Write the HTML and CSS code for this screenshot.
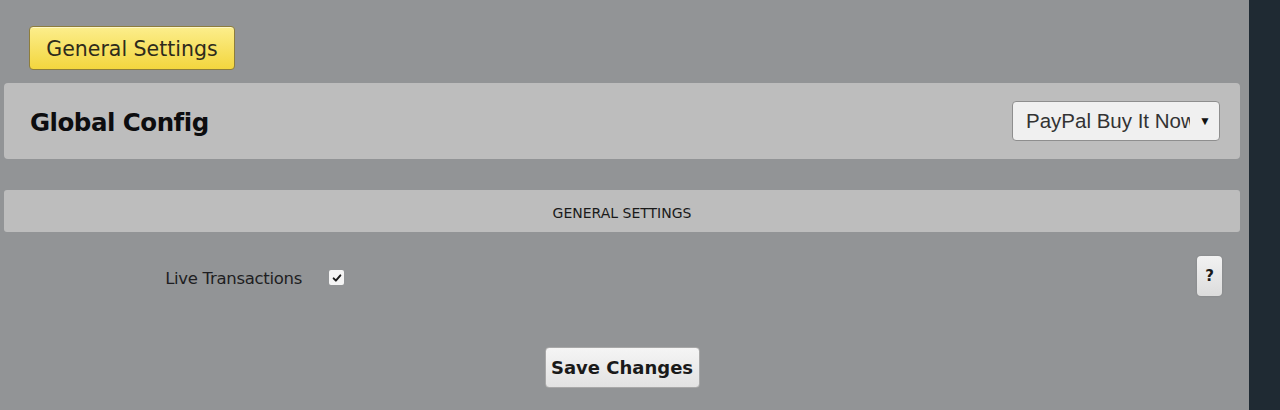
FILE: index.html
```html
<!DOCTYPE html>
<html>
<head>
<meta charset="utf-8">
<link rel="stylesheet" href="styles.css">
</head>
<body>
<div class="layout">
  <main class="main">
    <div class="tabs"><button class="tab">General Settings</button></div>
    <div class="panel">
      <h1 class="title">Global Config</h1>
      <div class="select">
        <span class="select-text">PayPal Buy It Now</span>
        <span class="select-arrow">&#9660;</span>
      </div>
    </div>
    <div class="section-head">GENERAL SETTINGS</div>
    <div class="row">
      <label class="row-label">Live Transactions</label>
      <span class="check"><svg viewBox="0 0 16 16" width="16" height="16"><path d="M3.5 8.5 L6.5 11.5 L12.5 4.5" fill="none" stroke="#1a1a1a" stroke-width="2.6" stroke-linecap="round" stroke-linejoin="round"/></svg></span>
      <span class="spacer"></span>
      <button class="help">?</button>
    </div>
    <div class="actions"><button class="save">Save Changes</button></div>
  </main>
  <aside class="side"></aside>
</div>
</body>
</html>
```
FILE: styles.css
```css
html, body {
  margin: 0;
  padding: 0;
  height: 410px;
  overflow: hidden;
  background: #929496;
  font-family: "DejaVu Sans", Verdana, sans-serif;
}
.layout {
  display: flex;
  height: 410px;
}
.main {
  width: 1249px;
  box-sizing: border-box;
  padding: 26px 9px 0 4px;
  background: #929496;
}
.side {
  flex: 1;
  background: #1f2a33;
}
.tabs {
  padding-left: 25px;
  height: 44px;
}
.tab {
  height: 44px;
  width: 206px;
  box-sizing: border-box;
  border: 1px solid #8d7d3c;
  border-radius: 4px;
  background: linear-gradient(#fcee8c, #f3d63e);
  color: #2e2b1c;
  font-family: "DejaVu Sans", Verdana, sans-serif;
  font-size: 20.5px;
  padding: 2px 0 0 0;
  box-shadow: inset 0 1px 0 rgba(255,255,255,0.5);
}
.panel {
  margin-top: 13px;
  height: 76px;
  background: #bdbdbd;
  border-radius: 4px;
  display: flex;
  align-items: center;
  padding: 0 20px 0 26px;
}
.title {
  margin: 2px 0 0 0;
  font-size: 24.5px;
  font-weight: bold;
  letter-spacing: -0.5px;
  color: #0d0d0f;
  flex: 1;
}
.select {
  width: 208px;
  height: 40px;
  box-sizing: border-box;
  border: 1px solid #8e8e8e;
  border-radius: 4px;
  background: #f0f0f0;
  display: flex;
  align-items: center;
  padding: 0 8px 0 13px;
  font-family: "Liberation Sans", Arial, sans-serif;
  overflow: hidden;
}
.select-text {
  width: 164px;
  overflow: hidden;
  white-space: nowrap;
  font-size: 20.5px;
  color: #333;
}
.select-arrow {
  margin-left: auto;
  font-size: 12px;
  color: #111;
}
.section-head {
  margin-top: 31px;
  height: 42px;
  background: #bdbdbd;
  border-radius: 3px;
  display: flex;
  align-items: center;
  justify-content: center;
  font-size: 14px;
  color: #1a1a1a;
  padding-top: 4px;
  box-sizing: border-box;
}
.row {
  margin-top: 24px;
  height: 40px;
  display: flex;
  align-items: center;
}
.row-label {
  width: 298px;
  text-align: right;
  font-size: 16.5px;
  letter-spacing: -0.3px;
  color: #1e1e22;
  padding-top: 5px;
  box-sizing: border-box;
}
.check {
  margin-left: 27px;
  width: 15px;
  height: 15px;
  background: #f4f4f4;
  border-radius: 2px;
  display: flex;
  align-items: center;
  justify-content: center;
  margin-top: 3px;
}
.check svg {
  width: 12px;
  height: 12px;
}
.spacer {
  flex: 1;
}
.help {
  margin-right: 18px;
  width: 25px;
  height: 40px;
  padding: 0;
  border: none;
  border-radius: 4px;
  background: linear-gradient(#f2f2f2, #dcdcdc);
  box-shadow: 0 0 2px rgba(0,0,0,0.15);
  font-family: "DejaVu Sans", Verdana, sans-serif;
  font-weight: bold;
  font-size: 15px;
  color: #1a1a1a;
}
.actions {
  margin-top: 51px;
  display: flex;
  justify-content: center;
}
.save {
  width: 155px;
  height: 41px;
  padding: 0;
  border: 1px solid #a8a8a8;
  border-radius: 4px;
  background: linear-gradient(#f5f5f5, #e2e2e2);
  font-family: "DejaVu Sans", Verdana, sans-serif;
  font-weight: bold;
  font-size: 18px;
  color: #1a1a1a;
}
```
